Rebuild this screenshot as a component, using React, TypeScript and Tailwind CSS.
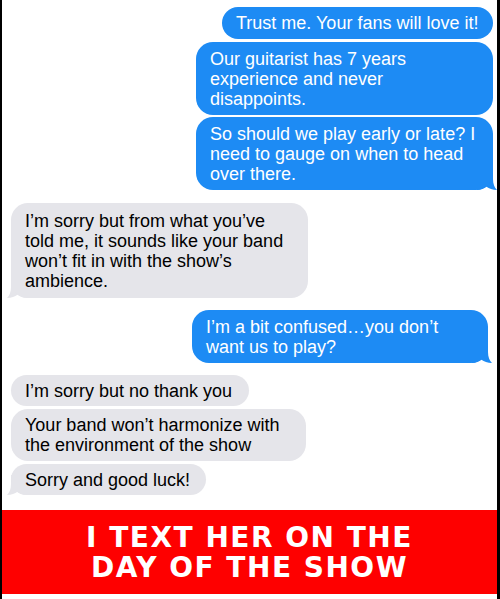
import React from "react";

const sans = { fontFamily: '"Liberation Sans", Arial, sans-serif' };

function Tail({ side, color }: { side: "left" | "right"; color: string }) {
  return (
    <svg
      width="20"
      height="20"
      viewBox="0 0 20 20"
      className={`absolute bottom-0 ${side === "right" ? "-right-[4px]" : "-left-[4px] -scale-x-100"}`}
    >
      <path d="M0 0 H16 V9 C16 14 17.5 17.5 20 20 C15.5 20 12 18.8 9.5 16.8 C7 18.8 4 20 0 20 Z" fill={color} />
    </svg>
  );
}

function Sent({ lines, w, mr = "mr-[4px]", py = "pt-[6px] pb-[6px]", tail = false }: { lines: string[]; w: string; mr?: string; py?: string; tail?: boolean }) {
  return (
    <div className={`relative self-end ${mr} ${w}`}>
      <div className={`relative z-10 rounded-[17px] bg-[#1d8bf4] pl-[14px] pr-[10px] ${py} text-[18px] leading-[20px] text-white whitespace-nowrap`}>
        {lines.map((l) => (
          <div key={l}>{l}</div>
        ))}
      </div>
      {tail && <Tail side="right" color="#1d8bf4" />}
    </div>
  );
}

function Received({ lines, w, py = "pt-[6px] pb-[6px]", tail = false }: { lines: string[]; w: string; py?: string; tail?: boolean }) {
  return (
    <div className={`relative self-start ml-[9px] ${w}`}>
      <div className={`relative z-10 rounded-[17px] bg-[#e5e5ea] pl-[14px] pr-[10px] ${py} text-[18px] leading-[20px] text-black whitespace-nowrap`}>
        {lines.map((l) => (
          <div key={l}>{l}</div>
        ))}
      </div>
      {tail && <Tail side="left" color="#e5e5ea" />}
    </div>
  );
}

export default function App() {
  return (
    <div className="h-[599px] w-[500px] overflow-hidden border-l-2 border-r-[3px] border-black bg-white" style={sans}>
      <div className="flex flex-col pt-[7px]">
        <Sent lines={["Trust me. Your fans will love it!"]} w="w-[271px]" />
        <div className="h-[3px]" />
        <Sent lines={["Our guitarist has 7 years", "experience and never", "disappoints."]} w="w-[297px]" py="pt-[7px] pb-[6px]" />
        <div className="h-[2px]" />
        <Sent lines={["So should we play early or late? I", "need to gauge on when to head", "over there."]} w="w-[297px]" py="pt-[7px] pb-[6px]" tail />
        <div className="h-[13px]" />
        <Received
          lines={["I\u2019m sorry but from what you\u2019ve", "told me, it sounds like your band", "won\u2019t fit in with the show\u2019s", "ambience."]}
          w="w-[297px]"
          py="pt-[8px] pb-[7px]"
          tail
        />
        <div className="h-[12px]" />
        <Sent lines={["I\u2019m a bit confused\u2026you don\u2019t", "want us to play?"]} w="w-[296px]" mr="mr-[9px]" py="pt-[7px] pb-[6px]" tail />
        <div className="h-[12px]" />
        <Received lines={["I\u2019m sorry but no thank you"]} w="w-[238px]" py="pt-[6px] pb-[5px]" />
        <div className="h-[3px]" />
        <Received lines={["Your band won\u2019t harmonize with", "the environment of the show"]} w="w-[295px]" />
        <div className="h-[3px]" />
        <Received lines={["Sorry and good luck!"]} w="w-[195px]" py="pt-[6px] pb-[5px]" tail />
      </div>
      <div
        className="mt-[15px] bg-[#fe0000] pt-[13px] pb-[11px] text-center text-[28px] font-bold uppercase leading-[30px] tracking-[1.5px] text-white"
        style={{ fontFamily: '"DejaVu Sans", sans-serif' }}
      >
        <div>I text her on the</div>
        <div>day of the show</div>
      </div>
    </div>
  );
}
